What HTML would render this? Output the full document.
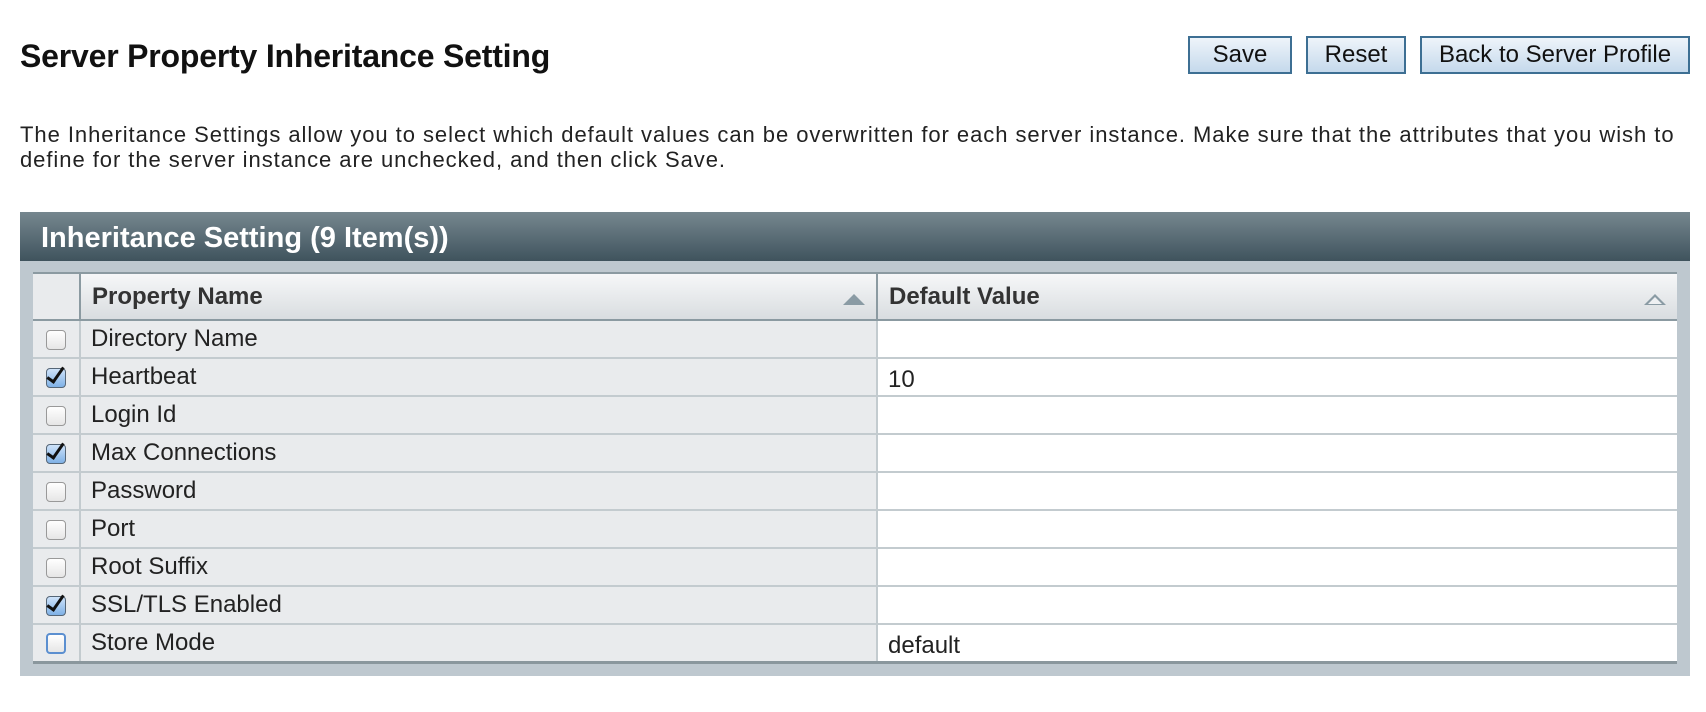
<!DOCTYPE html>
<html><head><style>
body{margin:0;width:1706px;height:712px;background:#fff;font-family:"Liberation Sans",Arial,sans-serif;color:#222;position:relative;overflow:hidden}
h1{position:absolute;left:20px;top:38px;margin:0;font-size:32px;font-weight:bold;color:#111;letter-spacing:-0.2px}
.btn{position:absolute;top:36px;height:34px;border:2px solid #3d6f93;background:linear-gradient(#eef4fa,#c5d9ec);font-size:24px;color:#111;text-align:center;line-height:34px;box-sizing:content-box}
p{position:absolute;left:20px;top:122px;margin:0;width:1690px;font-size:22px;line-height:25px;color:#222;letter-spacing:0.95px;white-space:nowrap}
.panel{position:absolute;left:20px;top:212px;width:1670px;height:464px;background:#bec8cf}
.ph{height:49px;background:linear-gradient(#76878f,#3f535d);color:#fff;font-weight:bold;font-size:29px;line-height:52px;padding-left:21px}
table{position:absolute;left:13px;top:60px;width:1644px;border-collapse:collapse;background:#fff}
th{height:45px;text-align:left;font-size:24px;font-weight:bold;color:#333;background:linear-gradient(#f6f7f8,#d9dde0);border-left:2px solid #8b9aa1;border-bottom:2px solid #8b9aa1;border-top:2px solid #8b9aa1;padding:0 0 0 11px;position:relative}
th:first-child{border-left:none;background:#e9ebed;padding:0}
td{height:36px;border-bottom:2px solid #c3cbcf;border-left:2px solid #c3cbcf;font-size:24px;color:#222;padding:0 0 0 10px}
td:first-child{border-left:none;padding:0;text-align:center;background:#e9ebed}
td.n{background:#e9ebed}
tr:last-child td{border-bottom:3px solid #8a979d}
.cb{display:inline-block;width:18px;height:18px;border:1px solid #999;border-radius:4px;background:linear-gradient(#fff,#e6e6e6);vertical-align:middle;position:relative}
.cb.c{background:linear-gradient(#cfe3fa,#7fb1e6);border-color:#567}
.cb.b{border:2px solid #5b8fd0;width:16px;height:17px}
.cb.c:after{content:"";position:absolute;left:4px;top:-5px;width:6px;height:16px;border-right:3px solid #111;border-bottom:3px solid #111;transform:rotate(35deg);}
.tri{position:absolute;right:11px;top:20px;width:0;height:0;border-left:11px solid transparent;border-right:11px solid transparent;border-bottom:11px solid #8a9ba4}
.tri2{position:absolute;right:11px;top:20px;width:0;height:0;border-left:11px solid transparent;border-right:11px solid transparent;border-bottom:11px solid #8a9ba4}
.tri2:after{content:"";position:absolute;left:-7px;top:3px;border-left:7px solid transparent;border-right:7px solid transparent;border-bottom:7px solid #eef0f2}
</style></head><body>
<h1>Server Property Inheritance Setting</h1>
<div class="btn" style="left:1188px;width:100px">Save</div>
<div class="btn" style="left:1306px;width:96px">Reset</div>
<div class="btn" style="left:1420px;width:266px">Back to Server Profile</div>
<p>The Inheritance Settings allow you to select which default values can be overwritten for each server instance. Make sure that the attributes that you wish to<br>define for the server instance are unchecked, and then click Save.</p>
<div class="panel"><div class="ph">Inheritance Setting (9 Item(s))</div>
<table>
<tr><th style="width:46px"></th><th style="width:784px">Property Name<span class="tri"></span></th><th>Default Value<span class="tri2"></span></th></tr>
<tr><td><span class="cb"></span></td><td class="n">Directory Name</td><td></td></tr>
<tr><td><span class="cb c"></span></td><td class="n">Heartbeat</td><td style="padding-top:6px;height:30px">10</td></tr>
<tr><td><span class="cb"></span></td><td class="n">Login Id</td><td></td></tr>
<tr><td><span class="cb c"></span></td><td class="n">Max Connections</td><td></td></tr>
<tr><td><span class="cb"></span></td><td class="n">Password</td><td></td></tr>
<tr><td><span class="cb"></span></td><td class="n">Port</td><td></td></tr>
<tr><td><span class="cb"></span></td><td class="n">Root Suffix</td><td></td></tr>
<tr><td><span class="cb c"></span></td><td class="n">SSL/TLS Enabled</td><td></td></tr>
<tr><td><span class="cb b"></span></td><td class="n">Store Mode</td><td style="padding-top:6px;height:30px">default</td></tr>
</table></div>
</body></html>
